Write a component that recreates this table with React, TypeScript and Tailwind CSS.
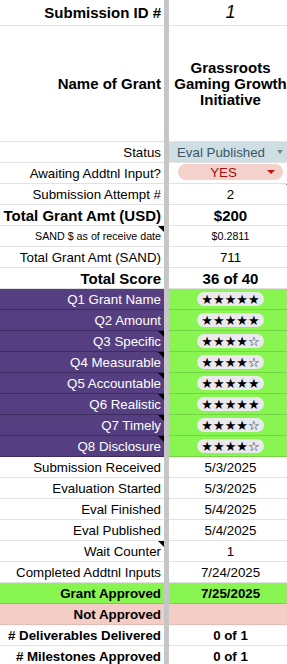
import { ReactNode } from "react";

// Colours picked off the sheet
const PURPLE = "bg-[#563f80]";
const GREEN = "bg-[#88f550]";

type Tone = "plain" | "purple" | "approved" | "rejected";

type RowProps = {
  label: ReactNode;
  value?: ReactNode;
  tone?: Tone;
  bold?: boolean;
  big?: boolean;
  noteLeft?: boolean;
  noteRight?: boolean;
  height?: string;
  align?: string;
  valueAlign?: string;
};

function Note() {
  return (
    <span className="absolute top-0 right-0 w-0 h-0 border-t-[6px] border-t-black border-l-[6px] border-l-transparent" />
  );
}

function Row({
  label,
  value,
  tone = "plain",
  bold = false,
  big = false,
  noteLeft = false,
  noteRight = false,
  height = "h-[21px]",
  align = "items-end pb-[1px]",
  valueAlign,
}: RowProps) {
  const leftBg =
    tone === "purple"
      ? `${PURPLE} text-white border-[#3d2b60]`
      : tone === "approved"
        ? `${GREEN} border-[#74d443]`
        : tone === "rejected"
          ? "bg-[#f4cdc6] border-[#e6bdb6]"
          : "bg-white border-[#e2e2e2]";
  const rightBg =
    tone === "purple" || tone === "approved"
      ? `${GREEN} border-[#74d443]`
      : tone === "rejected"
        ? "bg-[#f4cdc6] border-[#e6bdb6]"
        : "bg-white border-[#e2e2e2]";
  const weight = bold ? "font-bold" : "font-normal";
  const size = big ? "text-[15px] leading-[17px]" : "text-[13.3px] leading-[16px]";

  return (
    <div className={`flex ${height} shrink-0`}>
      <div
        className={`relative w-[164px] shrink-0 flex ${align} justify-end pr-[3px] border-b whitespace-nowrap overflow-hidden ${leftBg} ${weight} ${size}`}
      >
        {label}
        {noteLeft && <Note />}
      </div>
      <div className="w-[5px] shrink-0 bg-[#c6c6c6]" />
      <div
        className={`relative w-[123px] shrink-0 flex ${valueAlign ?? align} justify-center border-b ${rightBg} ${weight} ${size}`}
      >
        {value}
        {noteRight && <Note />}
      </div>
    </div>
  );
}

function Stars({ n }: { n: number }) {
  return (
    <span className="flex items-center justify-center w-[67px] h-[14px] mb-[2px] rounded-full bg-[#e9e9ee] text-black text-[13px] leading-none font-['DejaVu_Sans',sans-serif]">
      {"★".repeat(n) + "☆".repeat(5 - n)}
    </span>
  );
}

function StatusChip() {
  return (
    <div className="flex items-center w-full h-full bg-[#cfdee3] pl-[8px] pr-[9px] text-[#3b5663]">
      <span className="flex-1 text-[13.3px] pt-[2px]">Eval Published</span>
      <span className="w-0 h-0 border-t-[4px] border-t-[#6d8893] border-x-[3.5px] border-x-transparent" />
    </div>
  );
}

function YesChip() {
  return (
    <div className="flex items-center w-[105px] h-[16px] mb-[2px] rounded-full bg-[#f5d1cc] text-[#a0100d]">
      <span className="flex-1 text-center text-[13.3px] pl-[2px] pt-[1px]">YES</span>
      <span className="w-0 h-0 mr-[8px] border-t-[4px] border-t-[#c2140f] border-x-[4px] border-x-transparent" />
    </div>
  );
}

const scores: [string, number][] = [
  ["Q1 Grant Name", 5],
  ["Q2 Amount", 5],
  ["Q3 Specific", 4],
  ["Q4 Measurable", 4],
  ["Q5 Accountable", 5],
  ["Q6 Realistic", 5],
  ["Q7 Timely", 4],
  ["Q8 Disclosure", 4],
];

export default function App() {
  return (
    <div className="w-[287px] h-[664px] overflow-hidden bg-white text-black font-['Liberation_Sans',Arial,sans-serif]">
      <div className="w-[292px] flex flex-col">
        <Row
          height="h-[26px]"
          align="items-center"
          label="Submission ID #"
          bold
          big
          value={<span className="italic text-[18px] font-normal">1</span>}
        />
        <Row
          height="h-[116px]"
          align="items-center"
          label="Name of Grant"
          bold
          big
          value={
            <span className="text-center leading-[16px] px-[2px]">
              Grassroots Gaming Growth Initiative
            </span>
          }
        />
        <Row label="Status" valueAlign="items-stretch" value={<StatusChip />} />
        <Row label="Awaiting Addtnl Input?" value={<YesChip />} />
        <Row label="Submission Attempt #" value="2" noteRight />
        <Row label="Total Grant Amt (USD)" value="$200" bold big />
        <Row
          label={<span className="text-[10.7px] pb-[1px]">SAND $ as of receive date</span>}
          value={<span className="text-[10.7px] pb-[1px]">$0.2811</span>}
          noteLeft
        />
        <Row label="Total Grant Amt (SAND)" value="711" />
        <Row label="Total Score" value="36 of 40" bold big />

        {scores.map(([q, n], i) => (
          <Row key={q} tone="purple" label={q} value={<Stars n={n} />} noteLeft={i >= 2} />
        ))}

        <Row label="Submission Received" value="5/3/2025" />
        <Row label="Evaluation Started" value="5/3/2025" />
        <Row label="Eval Finished" value="5/4/2025" />
        <Row label="Eval Published" value="5/4/2025" />
        <Row label="Wait Counter" value="1" noteLeft />
        <Row label="Completed Addtnl Inputs" value="7/24/2025" />
        <Row tone="approved" label="Grant Approved" value="7/25/2025" bold />
        <Row tone="rejected" label="Not Approved" bold />
        <Row label="# Deliverables Delivered" value="0 of 1" bold />
        <Row label="# Milestones Approved" value="0 of 1" bold />
      </div>
    </div>
  );
}
